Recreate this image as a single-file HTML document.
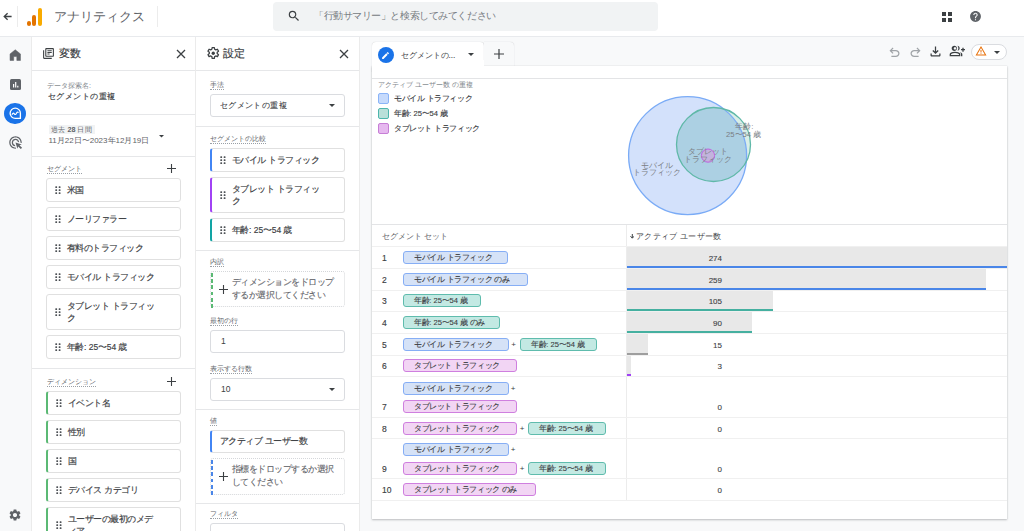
<!DOCTYPE html>
<html><head><meta charset="utf-8">
<style>
*{box-sizing:border-box;margin:0;padding:0}
html,body{width:1024px;height:531px;overflow:hidden}
body{position:relative;background:#f8f9fa;font-family:"Liberation Sans",sans-serif;color:#3c4043}
.a{position:absolute}
#top{left:0;top:0;width:1024px;height:37px;background:#fff;border-bottom:1px solid #e8eaed;z-index:2}
#rail{left:0;top:36px;width:32px;height:495px;background:#f8f9fa;border-right:1px solid #ebebeb}
#p1{left:32px;top:36px;width:164px;height:495px;background:#fff;border-right:1px solid #ebebeb}
#p2{left:196px;top:36px;width:164px;height:495px;background:#fff;border-right:1px solid #ebebeb}
.hdr{position:absolute;left:0;top:0;width:100%;height:35px;border-bottom:1px solid #e6e7e9}
.div{position:absolute;left:0;width:100%;height:1px;background:#e6e7e9}
.lbl{position:absolute;margin-top:.7px;font-size:7.3px;color:#63676c;line-height:9px;border-bottom:1px dotted #9aa0a6;white-space:nowrap}
.card{position:absolute;background:#fff;border:1px solid #e0e0e0;border-radius:3px;font-size:9px;color:#3c4043;line-height:11px;-webkit-text-stroke:.16px #3c4043}
.card .dots{position:absolute;left:8px;top:50%;margin-top:-4px;width:6px;height:8.5px;fill:#4d5156}
.card .t{position:absolute;left:20px;top:calc(50% + .5px);transform:translateY(-50%) scale(.944);transform-origin:0 50%;white-space:nowrap}
.card .t2{line-height:13px}
.sc{display:inline-block;transform-origin:0 50%}
.lb{border-left:2px solid}
#card{left:372px;top:66px;width:635px;height:452.5px;background:#fff;box-shadow:0 1px 2px rgba(60,64,67,.3),0 0 1px rgba(60,64,67,.2)}
.chip{position:absolute;height:13px;border:1px solid;border-radius:3px;font-size:8px;line-height:11px;padding-left:10px;white-space:nowrap;color:#3c4043;-webkit-text-stroke:.12px #3c4043}
.cb{background:#d5e2f7;border-color:#86aef5}
.ct{background:#c3e9e3;border-color:#5fbcad}
.cp{background:#f2d5f4;border-color:#cf7fdf}
.rn{position:absolute;margin-top:1px;font-size:8.5px;color:#3c4043;left:382px;-webkit-text-stroke:.15px #3c4043}
.rd{position:absolute;left:372px;width:635px;height:1px;background:#f0f0f0}
.bar{position:absolute;left:627px;background:#e8e8e8}
.num{position:absolute;margin-top:1px;font-size:8px;width:100px;text-align:right;left:622px;-webkit-text-stroke:.1px #3c4043}
</style></head><body>

<div id="top" class="a">
<svg class="a" style="left:3px;top:12px" width="9" height="9" viewBox="0 0 9 9"><path d="M8.6 4.5H1.5M4.6 1.2L1.2 4.5 4.6 7.8" fill="none" stroke="#3c4043" stroke-width="1.3"/></svg>
<div class="a" style="left:16.5px;top:6px;width:1px;height:21px;background:#ececec"></div>
<div class="a" style="left:26.8px;top:21.4px;width:4.4px;height:4.4px;border-radius:50%;background:#e37400"></div>
<div class="a" style="left:32.4px;top:14.6px;width:3.9px;height:11.2px;border-radius:2px;background:#e37400"></div>
<div class="a" style="left:37.8px;top:7.8px;width:4.2px;height:18px;border-radius:2.1px;background:#f9ab00"></div>
<div class="a" style="left:54px;top:9px;font-size:13px;line-height:16px;color:#5f6368;white-space:nowrap">アナリティクス</div>
<div class="a" style="left:157px;top:6px;width:1px;height:21px;background:#ececec"></div>
<div class="a" style="left:273px;top:2px;width:385px;height:29px;border-radius:4px;background:#f1f3f4"></div>
<svg class="a" style="left:286.5px;top:9px" width="14" height="14" viewBox="0 0 24 24"><path d="M15.5 14h-.79l-.28-.27A6.47 6.47 0 0 0 16 9.5 6.5 6.5 0 1 0 9.5 16c1.61 0 3.09-.59 4.23-1.57l.27.28v.79l5 4.99L20.49 19l-4.99-5zm-6 0C7.01 14 5 11.99 5 9.5S7.01 5 9.5 5 14 7.01 14 9.5 11.99 14 9.5 14z" fill="#3c4043"/></svg>
<div class="a" style="left:314px;top:10px;font-size:10px;line-height:12px;color:#757a7f;white-space:nowrap;transform:scale(.956);transform-origin:0 50%">「行動サマリー」と検索してみてください</div>
<svg class="a" style="left:941px;top:11px" width="12" height="12" viewBox="0 0 12 12"><rect x="1" y="1" width="4" height="4" fill="#3c4043"/><rect x="7" y="1" width="4" height="4" fill="#3c4043"/><rect x="1" y="7" width="4" height="4" fill="#3c4043"/><rect x="7" y="7" width="4" height="4" fill="#3c4043"/></svg>
<svg class="a" style="left:969px;top:10px" width="13" height="13" viewBox="0 0 24 24"><path d="M12 2C6.48 2 2 6.48 2 12s4.48 10 10 10 10-4.48 10-10S17.52 2 12 2zm1 17h-2v-2h2v2zm2.07-7.75l-.9.92C13.45 12.9 13 13.5 13 15h-2v-.5c0-1.1.45-2.1 1.17-2.83l1.24-1.26c.37-.36.59-.86.59-1.41 0-1.1-.9-2-2-2s-2 .9-2 2H8c0-2.21 1.79-4 4-4s4 1.79 4 4c0 .88-.36 1.68-.93 2.25z" fill="#5f6368"/></svg>
</div>
<div id="rail" class="a">
<svg class="a" style="left:9px;top:13px" width="12.5" height="12.5" viewBox="0 0 24 24"><path d="M2 22V9.5L12 1.5l10 8V22h-7v-7.5H9V22z" fill="#5f6368" stroke="#5f6368" stroke-width="1" stroke-linejoin="round"/></svg>
<div class="a" style="left:9.6px;top:43px;width:11.3px;height:11px;border-radius:1.5px;background:#5f6368"></div>
<svg class="a" style="left:9.6px;top:43px" width="11.3" height="11" viewBox="0 0 11.3 11"><path d="M3.6 8.5V5M5.7 8.5V3M7.8 8.5V6.8" stroke="#fff" stroke-width="1.2"/></svg>
<div class="a" style="left:4px;top:66.8px;width:22px;height:21.5px;border-radius:50%;background:#1a73e8"></div>
<svg class="a" style="left:7.8px;top:70.4px" width="14.5" height="14.5" viewBox="0 0 24 24"><path d="M12 3.5a8.5 8.5 0 1 0 0 17h8.5V12A8.5 8.5 0 0 0 12 3.5z" fill="none" stroke="#fff" stroke-width="2.2" stroke-linejoin="round"/><path d="M6.5 14.5c1.5-3 2.5-3.5 4-1.5s2.5 1 3.5-1 2-2.5 3.5-1" fill="none" stroke="#fff" stroke-width="1.9"/></svg>
<svg class="a" style="left:7.75px;top:99px" width="15" height="15" viewBox="0 0 24 24"><path d="M11.71 17.99A5.993 5.993 0 0 1 6 12c0-3.310 2.690-6 6-6 3.220 0 5.840 2.530 5.990 5.710l-2.100-.630a3.999 3.999 0 1 0-4.810 4.810l.630 2.100zM22 12c0 .3-.01.6-.04.9l-1.970-.590c.010-.1.010-.210.010-.310 0-4.420-3.580-8-8-8s-8 3.580-8 8 3.580 8 8 8c.1 0 .210 0 .310-.010l.590 1.970c-.3.030-.6.040-.9.040-5.520 0-10-4.480-10-10S6.480 2 12 2s10 4.480 10 10zm-3.770 4.260L22 15l-10-3 3 10 1.260-3.770 4.270 4.270 1.980-1.980-4.280-4.260z" fill="#5f6368"/></svg>
<svg class="a" style="left:7.5px;top:471.5px" width="14" height="14" viewBox="0 0 24 24"><path d="M19.14 12.94c.04-.3.06-.61.06-.94 0-.32-.02-.64-.07-.94l2.03-1.58a.49.49 0 0 0 .12-.61l-1.92-3.32a.488.488 0 0 0-.59-.22l-2.39.96c-.5-.38-1.03-.7-1.62-.94l-.36-2.54a.484.484 0 0 0-.48-.41h-3.84c-.24 0-.43.17-.47.41l-.36 2.54c-.59.24-1.13.57-1.62.94l-2.39-.96c-.22-.08-.47 0-.59.22L2.74 8.87c-.12.21-.08.47.12.61l2.03 1.58c-.05.3-.09.63-.09.94s.02.64.07.94l-2.03 1.58a.49.49 0 0 0-.12.61l1.92 3.32c.12.22.37.29.59.22l2.39-.96c.5.38 1.03.7 1.62.94l.36 2.54c.05.24.24.41.48.41h3.84c.24 0 .44-.17.47-.41l.36-2.54c.59-.24 1.13-.56 1.62-.94l2.39.96c.22.08.47 0 .59-.22l1.92-3.32c.12-.22.07-.47-.12-.61l-2.01-1.58zM12 15.6c-1.98 0-3.6-1.62-3.6-3.6s1.62-3.6 3.6-3.6 3.6 1.62 3.6 3.6-1.62 3.6-3.6 3.6z" fill="#5f6368"/></svg>
</div>
<div id="p1" class="a">
<div class="hdr"></div>
<svg class="a" style="left:10px;top:11px" width="13" height="13" viewBox="0 0 24 24"><path d="M4 6H2v14c0 1.1.9 2 2 2h14v-2H4V6zm16-4H8c-1.1 0-2 .9-2 2v12c0 1.1.9 2 2 2h12c1.1 0 2-.9 2-2V4c0-1.1-.9-2-2-2zm0 14H8V4h12v12zM10 9h8v2h-8zm0 3h4v2h-4zm0-6h8v2h-8z" fill="#3c4043"/></svg>
<div class="a" style="left:27px;top:10px;font-size:11px;line-height:14px;color:#3c4043;-webkit-text-stroke:.2px #3c4043">変数</div>
<svg class="a" style="left:144px;top:13px" width="10" height="10" viewBox="0 0 10 10"><path d="M1 1L9 9M9 1L1 9" stroke="#3c4043" stroke-width="1.3"/></svg>
<div class="a" style="left:15px;top:45px;font-size:7px;line-height:9px;color:#80868b">データ探索名:</div>
<div class="a" style="left:15.5px;top:54px;font-size:9px;line-height:12px;color:#3c4043;-webkit-text-stroke:.15px #3c4043;transform:scale(.9375);transform-origin:0 50%">セグメントの重複</div>
<div class="div" style="top:78px"></div>
<div class="a" style="left:16.5px;top:89.3px;width:46px;height:8.5px;background:#f1f3f4"></div><div class="a" style="left:18.5px;top:88.8px;font-size:8px;line-height:9.5px;color:#5f6368;white-space:nowrap;transform:scale(.9);transform-origin:0 50%">過去 <b>28</b> 日間</div>
<div class="a" style="left:16.5px;top:99px;font-size:8px;line-height:11px;color:#5f6368">11月22日〜2023年12月19日</div>
<svg class="a" style="left:127px;top:98.8px" width="5" height="3" viewBox="0 0 5 3"><path d="M0 0H5L2.5 2.6z" fill="#3c4043"/></svg>
<div class="div" style="top:120px"></div>
<div class="lbl" style="left:15px;top:127px">セグメント</div>
<svg class="a" style="left:135px;top:128px" width="9" height="9" viewBox="0 0 9 9"><path d="M4.5 0V9M0 4.5H9" stroke="#3c4043" stroke-width="1.1"/></svg>
<div class="card" style="left:14px;top:142px;width:135px;height:24px"><svg class="dots" viewBox="0 0 6 8.5"><rect x=".3" y=".3" width="1.8" height="1.8" rx=".5"/><rect x="3.7" y=".3" width="1.8" height="1.8" rx=".5"/><rect x=".3" y="3.3" width="1.8" height="1.8" rx=".5"/><rect x="3.7" y="3.3" width="1.8" height="1.8" rx=".5"/><rect x=".3" y="6.3" width="1.8" height="1.8" rx=".5"/><rect x="3.7" y="6.3" width="1.8" height="1.8" rx=".5"/></svg><div class="t">米国</div></div>
<div class="card" style="left:14px;top:171px;width:135px;height:24px"><svg class="dots" viewBox="0 0 6 8.5"><rect x=".3" y=".3" width="1.8" height="1.8" rx=".5"/><rect x="3.7" y=".3" width="1.8" height="1.8" rx=".5"/><rect x=".3" y="3.3" width="1.8" height="1.8" rx=".5"/><rect x="3.7" y="3.3" width="1.8" height="1.8" rx=".5"/><rect x=".3" y="6.3" width="1.8" height="1.8" rx=".5"/><rect x="3.7" y="6.3" width="1.8" height="1.8" rx=".5"/></svg><div class="t">ノーリファラー</div></div>
<div class="card" style="left:14px;top:200px;width:135px;height:24px"><svg class="dots" viewBox="0 0 6 8.5"><rect x=".3" y=".3" width="1.8" height="1.8" rx=".5"/><rect x="3.7" y=".3" width="1.8" height="1.8" rx=".5"/><rect x=".3" y="3.3" width="1.8" height="1.8" rx=".5"/><rect x="3.7" y="3.3" width="1.8" height="1.8" rx=".5"/><rect x=".3" y="6.3" width="1.8" height="1.8" rx=".5"/><rect x="3.7" y="6.3" width="1.8" height="1.8" rx=".5"/></svg><div class="t">有料のトラフィック</div></div>
<div class="card" style="left:14px;top:229px;width:135px;height:24px"><svg class="dots" viewBox="0 0 6 8.5"><rect x=".3" y=".3" width="1.8" height="1.8" rx=".5"/><rect x="3.7" y=".3" width="1.8" height="1.8" rx=".5"/><rect x=".3" y="3.3" width="1.8" height="1.8" rx=".5"/><rect x="3.7" y="3.3" width="1.8" height="1.8" rx=".5"/><rect x=".3" y="6.3" width="1.8" height="1.8" rx=".5"/><rect x="3.7" y="6.3" width="1.8" height="1.8" rx=".5"/></svg><div class="t">モバイル トラフィック</div></div>
<div class="card" style="left:14px;top:258px;width:135px;height:36px"><svg class="dots" viewBox="0 0 6 8.5"><rect x=".3" y=".3" width="1.8" height="1.8" rx=".5"/><rect x="3.7" y=".3" width="1.8" height="1.8" rx=".5"/><rect x=".3" y="3.3" width="1.8" height="1.8" rx=".5"/><rect x="3.7" y="3.3" width="1.8" height="1.8" rx=".5"/><rect x=".3" y="6.3" width="1.8" height="1.8" rx=".5"/><rect x="3.7" y="6.3" width="1.8" height="1.8" rx=".5"/></svg><div class="t t2">タブレット トラフィッ<br>ク</div></div>
<div class="card" style="left:14px;top:299px;width:135px;height:24px"><svg class="dots" viewBox="0 0 6 8.5"><rect x=".3" y=".3" width="1.8" height="1.8" rx=".5"/><rect x="3.7" y=".3" width="1.8" height="1.8" rx=".5"/><rect x=".3" y="3.3" width="1.8" height="1.8" rx=".5"/><rect x="3.7" y="3.3" width="1.8" height="1.8" rx=".5"/><rect x=".3" y="6.3" width="1.8" height="1.8" rx=".5"/><rect x="3.7" y="6.3" width="1.8" height="1.8" rx=".5"/></svg><div class="t">年齢: 25〜54 歳</div></div>
<div class="div" style="top:332px"></div>
<div class="lbl" style="left:15px;top:340px">ディメンション</div>
<svg class="a" style="left:135px;top:341px" width="9" height="9" viewBox="0 0 9 9"><path d="M4.5 0V9M0 4.5H9" stroke="#3c4043" stroke-width="1.1"/></svg>
<div class="card lb" style="left:14px;top:355px;width:135px;height:24px;border-left:2px solid #5bb974"><svg class="dots" viewBox="0 0 6 8.5"><rect x=".3" y=".3" width="1.8" height="1.8" rx=".5"/><rect x="3.7" y=".3" width="1.8" height="1.8" rx=".5"/><rect x=".3" y="3.3" width="1.8" height="1.8" rx=".5"/><rect x="3.7" y="3.3" width="1.8" height="1.8" rx=".5"/><rect x=".3" y="6.3" width="1.8" height="1.8" rx=".5"/><rect x="3.7" y="6.3" width="1.8" height="1.8" rx=".5"/></svg><div class="t">イベント名</div></div>
<div class="card lb" style="left:14px;top:384px;width:135px;height:24px;border-left:2px solid #5bb974"><svg class="dots" viewBox="0 0 6 8.5"><rect x=".3" y=".3" width="1.8" height="1.8" rx=".5"/><rect x="3.7" y=".3" width="1.8" height="1.8" rx=".5"/><rect x=".3" y="3.3" width="1.8" height="1.8" rx=".5"/><rect x="3.7" y="3.3" width="1.8" height="1.8" rx=".5"/><rect x=".3" y="6.3" width="1.8" height="1.8" rx=".5"/><rect x="3.7" y="6.3" width="1.8" height="1.8" rx=".5"/></svg><div class="t">性別</div></div>
<div class="card lb" style="left:14px;top:413px;width:135px;height:24px;border-left:2px solid #5bb974"><svg class="dots" viewBox="0 0 6 8.5"><rect x=".3" y=".3" width="1.8" height="1.8" rx=".5"/><rect x="3.7" y=".3" width="1.8" height="1.8" rx=".5"/><rect x=".3" y="3.3" width="1.8" height="1.8" rx=".5"/><rect x="3.7" y="3.3" width="1.8" height="1.8" rx=".5"/><rect x=".3" y="6.3" width="1.8" height="1.8" rx=".5"/><rect x="3.7" y="6.3" width="1.8" height="1.8" rx=".5"/></svg><div class="t">国</div></div>
<div class="card lb" style="left:14px;top:442px;width:135px;height:24px;border-left:2px solid #5bb974"><svg class="dots" viewBox="0 0 6 8.5"><rect x=".3" y=".3" width="1.8" height="1.8" rx=".5"/><rect x="3.7" y=".3" width="1.8" height="1.8" rx=".5"/><rect x=".3" y="3.3" width="1.8" height="1.8" rx=".5"/><rect x="3.7" y="3.3" width="1.8" height="1.8" rx=".5"/><rect x=".3" y="6.3" width="1.8" height="1.8" rx=".5"/><rect x="3.7" y="6.3" width="1.8" height="1.8" rx=".5"/></svg><div class="t">デバイス カテゴリ</div></div>
<div class="card lb" style="left:14px;top:471px;width:135px;height:36px;border-left:2px solid #5bb974"><svg class="dots" viewBox="0 0 6 8.5"><rect x=".3" y=".3" width="1.8" height="1.8" rx=".5"/><rect x="3.7" y=".3" width="1.8" height="1.8" rx=".5"/><rect x=".3" y="3.3" width="1.8" height="1.8" rx=".5"/><rect x="3.7" y="3.3" width="1.8" height="1.8" rx=".5"/><rect x=".3" y="6.3" width="1.8" height="1.8" rx=".5"/><rect x="3.7" y="6.3" width="1.8" height="1.8" rx=".5"/></svg><div class="t t2">ユーザーの最初のメデ<br>ィア</div></div>
</div>
<div id="p2" class="a">
<div class="hdr"></div>
<svg class="a" style="left:9.8px;top:10.3px" width="14.5" height="14.5" viewBox="0 0 24 24"><path d="M10.2 2.5h3.6l.5 2.8 1.9 1.1 2.7-1 1.8 3.1-2.2 1.8v2.3l2.2 1.8-1.8 3.1-2.7-1-1.9 1.1-.5 2.9h-3.6l-.5-2.9-1.9-1.1-2.7 1-1.8-3.1 2.2-1.8v-2.3L3.3 8.5l1.8-3.1 2.7 1 1.9-1.1z" fill="none" stroke="#3c4043" stroke-width="2.1" stroke-linejoin="round"/><circle cx="12" cy="12" r="2.7" fill="#3c4043"/></svg>
<div class="a" style="left:27px;top:10px;font-size:11px;line-height:14px;color:#3c4043;-webkit-text-stroke:.2px #3c4043">設定</div>
<svg class="a" style="left:143px;top:13px" width="10" height="10" viewBox="0 0 10 10"><path d="M1 1L9 9M9 1L1 9" stroke="#3c4043" stroke-width="1.3"/></svg>
<div class="lbl" style="left:14px;top:43px">手法</div>
<div class="a" style="left:14px;top:58px;width:135px;height:23px;border:1px solid #dadce0;border-radius:3px"></div>
<div class="a" style="left:24px;top:64px;font-size:9px;line-height:11px;color:#3c4043;-webkit-text-stroke:.1px #3c4043;transform:scale(.93);transform-origin:0 50%">セグメントの重複</div>
<svg class="a" style="left:133px;top:68px" width="6" height="4" viewBox="0 0 6 4"><path d="M0 0H6L3 3z" fill="#3c4043"/></svg>
<div class="div" style="top:90px"></div>
<div class="lbl" style="left:14px;top:97px">セグメントの比較</div>
<div class="card lb" style="left:14px;top:112px;width:135px;height:24px;border-left:2px solid #4285f4"><svg class="dots" viewBox="0 0 6 8.5"><rect x=".3" y=".3" width="1.8" height="1.8" rx=".5"/><rect x="3.7" y=".3" width="1.8" height="1.8" rx=".5"/><rect x=".3" y="3.3" width="1.8" height="1.8" rx=".5"/><rect x="3.7" y="3.3" width="1.8" height="1.8" rx=".5"/><rect x=".3" y="6.3" width="1.8" height="1.8" rx=".5"/><rect x="3.7" y="6.3" width="1.8" height="1.8" rx=".5"/></svg><div class="t">モバイル トラフィック</div></div>
<div class="card lb" style="left:14px;top:141px;width:135px;height:36px;border-left:2px solid #a142f4"><svg class="dots" viewBox="0 0 6 8.5"><rect x=".3" y=".3" width="1.8" height="1.8" rx=".5"/><rect x="3.7" y=".3" width="1.8" height="1.8" rx=".5"/><rect x=".3" y="3.3" width="1.8" height="1.8" rx=".5"/><rect x="3.7" y="3.3" width="1.8" height="1.8" rx=".5"/><rect x=".3" y="6.3" width="1.8" height="1.8" rx=".5"/><rect x="3.7" y="6.3" width="1.8" height="1.8" rx=".5"/></svg><div class="t t2">タブレット トラフィッ<br>ク</div></div>
<div class="card lb" style="left:14px;top:182px;width:135px;height:24px;border-left:2px solid #12a4a4"><svg class="dots" viewBox="0 0 6 8.5"><rect x=".3" y=".3" width="1.8" height="1.8" rx=".5"/><rect x="3.7" y=".3" width="1.8" height="1.8" rx=".5"/><rect x=".3" y="3.3" width="1.8" height="1.8" rx=".5"/><rect x="3.7" y="3.3" width="1.8" height="1.8" rx=".5"/><rect x=".3" y="6.3" width="1.8" height="1.8" rx=".5"/><rect x="3.7" y="6.3" width="1.8" height="1.8" rx=".5"/></svg><div class="t">年齢: 25〜54 歳</div></div>
<div class="div" style="top:214px"></div>
<div class="lbl" style="left:14px;top:220px">内訳</div>
<div class="a" style="left:14px;top:235px;width:135px;height:36px;border:1px dotted #d5d7da;border-radius:3px"></div>
<div class="a" style="left:14.5px;top:236.5px;width:2px;height:35px;background:repeating-linear-gradient(to bottom,#5bb974 0 3.8px,transparent 3.8px 6.2px)"></div>
<svg class="a" style="left:23px;top:249px" width="9" height="9" viewBox="0 0 9 9"><path d="M4.5 0V9M0 4.5H9" stroke="#3c4043" stroke-width="1.1"/></svg>
<div class="a" style="left:36px;top:241px;font-size:9px;line-height:12.7px;color:#5f6368;white-space:nowrap;-webkit-text-stroke:.1px #5f6368;transform:scale(.944);transform-origin:0 0">ディメンションをドロップ<br>するか選択してください</div>
<div class="lbl" style="left:14px;top:279px">最初の行</div>
<div class="a" style="left:14px;top:294px;width:135px;height:23px;border:1px solid #dadce0;border-radius:3px"></div>
<div class="a" style="left:25px;top:300px;font-size:8.5px;line-height:11px;color:#3c4043">1</div>
<div class="lbl" style="left:14px;top:327px">表示する行数</div>
<div class="a" style="left:14px;top:342px;width:135px;height:23px;border:1px solid #dadce0;border-radius:3px"></div>
<div class="a" style="left:25px;top:348px;font-size:8.5px;line-height:11px;color:#3c4043">10</div>
<svg class="a" style="left:133px;top:352px" width="6" height="4" viewBox="0 0 6 4"><path d="M0 0H6L3 3z" fill="#3c4043"/></svg>
<div class="div" style="top:373px"></div>
<div class="lbl" style="left:14px;top:379px">値</div>
<div class="card lb" style="left:14px;top:394px;width:135px;height:23px;border-left:2px solid #4285f4"><div class="t" style="left:8px">アクティブ ユーザー数</div></div>
<div class="a" style="left:14px;top:422px;width:135px;height:37px;border:1px dotted #d5d7da;border-radius:3px"></div>
<div class="a" style="left:14.5px;top:423.5px;width:2px;height:36px;background:repeating-linear-gradient(to bottom,#4a86e8 0 3.8px,transparent 3.8px 6.2px)"></div>
<svg class="a" style="left:23px;top:436px" width="9" height="9" viewBox="0 0 9 9"><path d="M4.5 0V9M0 4.5H9" stroke="#3c4043" stroke-width="1.1"/></svg>
<div class="a" style="left:36px;top:428px;font-size:9px;line-height:12.7px;color:#5f6368;white-space:nowrap;-webkit-text-stroke:.1px #5f6368;transform:scale(.944);transform-origin:0 0">指標をドロップするか選択<br>してください</div>
<div class="div" style="top:467px"></div>
<div class="lbl" style="left:14px;top:472px">フィルタ</div>
<div class="a" style="left:14px;top:487px;width:135px;height:30px;border:1px solid #dadce0;border-radius:3px"></div>
</div>
<div class="a" style="left:372px;top:42px;width:112px;height:30px;background:#fff;border-radius:4px 4px 0 0;box-shadow:0 0 1px rgba(60,64,67,.3)"></div>
<div class="a" style="left:484px;top:42px;width:30px;height:25px;background:#f8f9fa;border-radius:0 4px 0 0;box-shadow:0 0 1px rgba(60,64,67,.3)"></div>
<div id="card" class="a"></div>
<div class="a" style="left:372px;top:60px;width:112px;height:8px;background:#fff"></div>
<div class="a" style="left:377.5px;top:47px;width:16px;height:16px;border-radius:50%;background:#1a73e8"></div>
<svg class="a" style="left:381px;top:50.5px" width="9" height="9" viewBox="0 0 24 24"><path d="M3 17.25V21h3.75L17.81 9.94l-3.75-3.75L3 17.25zM20.71 7.04a1 1 0 0 0 0-1.41l-2.34-2.34a1 1 0 0 0-1.41 0l-1.83 1.83 3.75 3.75 1.83-1.83z" fill="#fff"/></svg>
<div class="a" style="left:400.5px;top:50px;font-size:8.3px;line-height:11px;color:#3c4043;white-space:nowrap">セグメントの...</div>
<svg class="a" style="left:468px;top:52.5px" width="6" height="4" viewBox="0 0 6 4"><path d="M0 0H6L3 3z" fill="#3c4043"/></svg>
<svg class="a" style="left:493.5px;top:49px" width="10" height="10" viewBox="0 0 10 10"><path d="M5 0V10M0 5H10" stroke="#3c4043" stroke-width="1.2"/></svg>
<svg class="a" style="left:886.5px;top:44.5px" width="15" height="15" viewBox="0 -960 960 960"><path d="M280-200v-80h284q63 0 109.5-40T720-420q0-60-46.5-100T564-560H312l104 104-56 56-200-200 200-200 56 56-104 104h252q97 0 166.5 63T800-420q0 94-69.5 157T564-200H280Z" fill="#a0a4a8"/></svg>
<svg class="a" style="left:907.5px;top:44.5px" width="15" height="15" viewBox="0 -960 960 960"><path d="M396-200q-97 0-166.5-63T160-420q0-94 69.5-157T396-640h252L544-744l56-56 200 200-200 200-56-56 104-104H396q-63 0-109.5 40T240-420q0 60 46.5 100T396-280h284v80H396Z" fill="#a0a4a8"/></svg>
<svg class="a" style="left:927.5px;top:43.5px" width="15" height="15" viewBox="0 -960 960 960"><path d="M480-320 280-520l56-58 104 104v-326h80v326l104-104 56 58-200 200ZM240-160q-33 0-56.5-23.5T160-240v-120h80v120h480v-120h80v120q0 33-23.5 56.5T720-160H240Z" fill="#3c4043"/></svg>
<svg class="a" style="left:948.7px;top:43.3px" width="16" height="16" viewBox="0 -960 960 960"><path d="M500-482q29-32 44.5-73t15.5-85q0-44-15.5-85T500-798q60 8 100 53t40 105q0 60-40 105t-100 53Zm220 322v-120q0-36-16-68.5T662-406q51 18 94.5 46.5T800-280v120h-80Zm80-280v-80h-80v-80h80v-80h80v80h80v80h-80v80h-80Zm-480-40q-66 0-113-47t-47-113q0-66 47-113t113-47q66 0 113 47t47 113q0 66-47 113t-113 47ZM40-160v-112q0-34 17.5-62.5T104-378q62-31 126-46.5T360-440q66 0 130 15.5T616-378q29 15 46.5 43.5T680-272v112H40Zm320-400q33 0 56.5-23.5T440-640q0-33-23.5-56.5T360-720q-33 0-56.5 23.5T280-640q0 33 23.5 56.5T360-560ZM120-240h480v-32q0-11-5.5-20T580-306q-54-27-109-40.5T360-360q-56 0-111 13.5T140-306q-9 5-14.5 14t-5.5 20v32Z" fill="#3c4043"/></svg>
<div class="a" style="left:971px;top:43.5px;width:36px;height:16px;border:1px solid #dadce0;border-radius:8px;background:#fff"></div>
<svg class="a" style="left:975.2px;top:45px" width="12" height="12" viewBox="0 -960 960 960"><path d="m40-120 440-760 440 760H40Zm138-80h604L480-720 178-200Zm302-40q17 0 28.5-11.5T520-280q0-17-11.5-28.5T480-320q-17 0-28.5 11.5T440-280q0 17 11.5 28.5T480-240Zm-40-120h80v-200h-80v200Z" fill="#e8710a"/></svg>
<svg class="a" style="left:993.5px;top:50.5px" width="6" height="4" viewBox="0 0 6 4"><path d="M0 0H6L3 3z" fill="#3c4043"/></svg>
<div class="a" style="left:372px;top:78px;width:635px;height:1px;background:#e3e4e6"></div>
<div class="a" style="left:378px;top:80px;font-size:6.9px;line-height:10px;color:#80868b;white-space:nowrap">アクティブ ユーザー数 の重複</div>
<div class="a" style="left:378px;top:93px;width:11px;height:11px;background:#c6dafc;border:1px solid #8ab4f8;border-radius:2px"></div>
<div class="a" style="left:394px;top:93px;font-size:8px;line-height:11px;color:#3c4043;white-space:nowrap;-webkit-text-stroke:.15px #3c4043;transform:scale(.95);transform-origin:0 50%">モバイル トラフィック</div>
<div class="a" style="left:378px;top:108px;width:11px;height:11px;background:#b9e0d9;border:1px solid #4db6ac;border-radius:2px"></div>
<div class="a" style="left:394px;top:108px;font-size:8px;line-height:11px;color:#3c4043;white-space:nowrap;-webkit-text-stroke:.15px #3c4043;transform:scale(.95);transform-origin:0 50%">年齢: 25〜54 歳</div>
<div class="a" style="left:378px;top:123px;width:11px;height:11px;background:#e6b8ef;border:1px solid #c77ed6;border-radius:2px"></div>
<div class="a" style="left:394px;top:123px;font-size:8px;line-height:11px;color:#3c4043;white-space:nowrap;-webkit-text-stroke:.15px #3c4043;transform:scale(.95);transform-origin:0 50%">タブレット トラフィック</div>
<svg class="a" style="left:600px;top:80px" width="200" height="145" viewBox="600 80 200 145">
<defs><clipPath id="cb"><circle cx="687.6" cy="155.6" r="59"/></clipPath></defs>
<circle cx="687.6" cy="155.6" r="59" fill="#d3e1fb"/>
<circle cx="713.5" cy="144.5" r="37" fill="#d9eee7"/>
<circle cx="713.5" cy="144.5" r="37" fill="#acd0e3" clip-path="url(#cb)"/>
<circle cx="687.6" cy="155.6" r="59" fill="none" stroke="#7aabf6" stroke-width="1.3"/>
<circle cx="713.5" cy="144.5" r="37" fill="none" stroke="#5fb8a8" stroke-width="1.3"/>
<circle cx="708" cy="155.6" r="6.6" fill="#c3b3dd" stroke="#c060e0" stroke-width="1"/>
<g font-size="8" fill="#7a7e83" text-anchor="middle" font-family="Liberation Sans, sans-serif"><text transform="translate(656.7,167.5) scale(.96)">モバイル</text><text transform="translate(656.7,175.3) scale(.96)">トラフィック</text><text transform="translate(708,154) scale(.96)">タブレット</text><text transform="translate(708,161.8) scale(.96)">トラフィック</text><text transform="translate(744.4,129) scale(.96)">年齢:</text><text transform="translate(743.6,137) scale(.96)">25〜54 歳</text></g></svg>

<div class="a" style="left:372px;top:224px;width:635px;height:1px;background:#e3e4e6"></div>
<div class="a" style="left:382px;top:231px;font-size:8px;line-height:11px;color:#5f6368;white-space:nowrap">セグメント セット</div>
<svg class="a" style="left:629.8px;top:234.2px" width="4.6" height="4.6" viewBox="0 0 4.6 4.6"><path d="M2.3 0V4M0.5 2.2L2.3 4.2 4.1 2.2" fill="none" stroke="#3c4043" stroke-width="1"/></svg><div class="a" style="left:636.4px;top:231px;font-size:9px;line-height:11px;color:#3c4043;white-space:nowrap;transform:scale(.925);transform-origin:0 50%">アクティブ ユーザー数</div>
<div class="a" style="left:626px;top:225px;width:1px;height:275px;background:#ececec"></div>
<div class="a" style="left:627px;top:247px;width:380.0px;height:21px;background:#e8e8e8;border-bottom:2px solid #4a86e8"></div>
<div class="a" style="left:627px;top:269px;width:359.2px;height:21px;background:#e8e8e8;border-bottom:2px solid #4a86e8"></div>
<div class="a" style="left:627px;top:291px;width:145.6px;height:20px;background:#e8e8e8;border-bottom:2px solid #45b0a0"></div>
<div class="a" style="left:627px;top:312px;width:124.8px;height:21px;background:#e8e8e8;border-bottom:2px solid #45b0a0"></div>
<div class="a" style="left:627px;top:334px;width:20.8px;height:21px;background:#e8e8e8;border-bottom:2px solid #9e9e9e"></div>
<div class="a" style="left:627px;top:356px;width:4.2px;height:20px;background:#e8e8e8;border-bottom:2px solid #a142f4"></div>
<div class="rd" style="top:246px"></div>
<div class="rd" style="top:268px"></div>
<div class="rd" style="top:290px"></div>
<div class="rd" style="top:311px"></div>
<div class="rd" style="top:333px"></div>
<div class="rd" style="top:355px"></div>
<div class="rd" style="top:376px"></div>
<div class="rd" style="top:417px"></div>
<div class="rd" style="top:438px"></div>
<div class="rd" style="top:478px"></div>
<div class="rd" style="top:500px"></div>
<div class="num" style="top:252.0px;line-height:11px;color:#3c4043">274</div>
<div class="rn" style="top:252.0px;line-height:11px">1</div>
<div class="num" style="top:273.7px;line-height:11px;color:#3c4043">259</div>
<div class="rn" style="top:273.7px;line-height:11px">2</div>
<div class="num" style="top:295.4px;line-height:11px;color:#3c4043">105</div>
<div class="rn" style="top:295.4px;line-height:11px">3</div>
<div class="num" style="top:317.0px;line-height:11px;color:#3c4043">90</div>
<div class="rn" style="top:317.0px;line-height:11px">4</div>
<div class="num" style="top:338.7px;line-height:11px;color:#3c4043">15</div>
<div class="rn" style="top:338.7px;line-height:11px">5</div>
<div class="num" style="top:360.3px;line-height:11px;color:#3c4043">3</div>
<div class="rn" style="top:360.3px;line-height:11px">6</div>
<div class="num" style="top:401.0px;line-height:11px;color:#3c4043">0</div>
<div class="rn" style="top:401.0px;line-height:11px">7</div>
<div class="num" style="top:422.5px;line-height:11px;color:#3c4043">0</div>
<div class="rn" style="top:422.5px;line-height:11px">8</div>
<div class="num" style="top:462.5px;line-height:11px;color:#3c4043">0</div>
<div class="rn" style="top:462.5px;line-height:11px">9</div>
<div class="num" style="top:483.9px;line-height:11px;color:#3c4043">0</div>
<div class="rn" style="top:483.9px;line-height:11px">10</div>
<div class="chip cb" style="left:403px;top:251.0px;width:105px"><span class="sc" style="transform:scale(.95)">モバイル トラフィック</span></div>
<div class="chip cb" style="left:403px;top:272.7px;width:124.5px"><span class="sc" style="transform:scale(.95)">モバイル トラフィック のみ</span></div>
<div class="chip ct" style="left:403px;top:294.4px;width:78px"><span class="sc" style="transform:scale(.95)">年齢: 25〜54 歳</span></div>
<div class="chip ct" style="left:403px;top:316.0px;width:96.7px"><span class="sc" style="transform:scale(.95)">年齢: 25〜54 歳 のみ</span></div>
<div class="chip cb" style="left:403px;top:337.7px;width:105.5px"><span class="sc" style="transform:scale(.95)">モバイル トラフィック</span></div>
<div class="a" style="left:511.20000000000005px;top:338.7px;font-size:8px;line-height:11px;color:#3c4043">+</div>
<div class="chip ct" style="left:519.7px;top:337.7px;width:77.6px"><span class="sc" style="transform:scale(.95)">年齢: 25〜54 歳</span></div>
<div class="chip cp" style="left:403px;top:359.3px;width:113.5px"><span class="sc" style="transform:scale(.95)">タブレット トラフィック</span></div>
<div class="chip cb" style="left:403px;top:381.8px;width:105.5px"><span class="sc" style="transform:scale(.95)">モバイル トラフィック</span></div>
<div class="a" style="left:510.70000000000005px;top:382.8px;font-size:8px;line-height:11px;color:#3c4043">+</div>
<div class="chip cp" style="left:403px;top:400.0px;width:113.5px"><span class="sc" style="transform:scale(.95)">タブレット トラフィック</span></div>
<div class="chip cp" style="left:403px;top:421.5px;width:113.5px"><span class="sc" style="transform:scale(.95)">タブレット トラフィック</span></div>
<div class="a" style="left:519.7px;top:422.5px;font-size:8px;line-height:11px;color:#3c4043">+</div>
<div class="chip ct" style="left:528.3px;top:421.5px;width:77.4px"><span class="sc" style="transform:scale(.95)">年齢: 25〜54 歳</span></div>
<div class="chip cb" style="left:403px;top:443.2px;width:105.5px"><span class="sc" style="transform:scale(.95)">モバイル トラフィック</span></div>
<div class="a" style="left:510.70000000000005px;top:444.2px;font-size:8px;line-height:11px;color:#3c4043">+</div>
<div class="chip cp" style="left:403px;top:461.5px;width:113.5px"><span class="sc" style="transform:scale(.95)">タブレット トラフィック</span></div>
<div class="a" style="left:519.7px;top:462.5px;font-size:8px;line-height:11px;color:#3c4043">+</div>
<div class="chip ct" style="left:528.3px;top:461.5px;width:77.4px"><span class="sc" style="transform:scale(.95)">年齢: 25〜54 歳</span></div>
<div class="chip cp" style="left:403px;top:482.9px;width:133px"><span class="sc" style="transform:scale(.95)">タブレット トラフィック のみ</span></div>
</body></html>
